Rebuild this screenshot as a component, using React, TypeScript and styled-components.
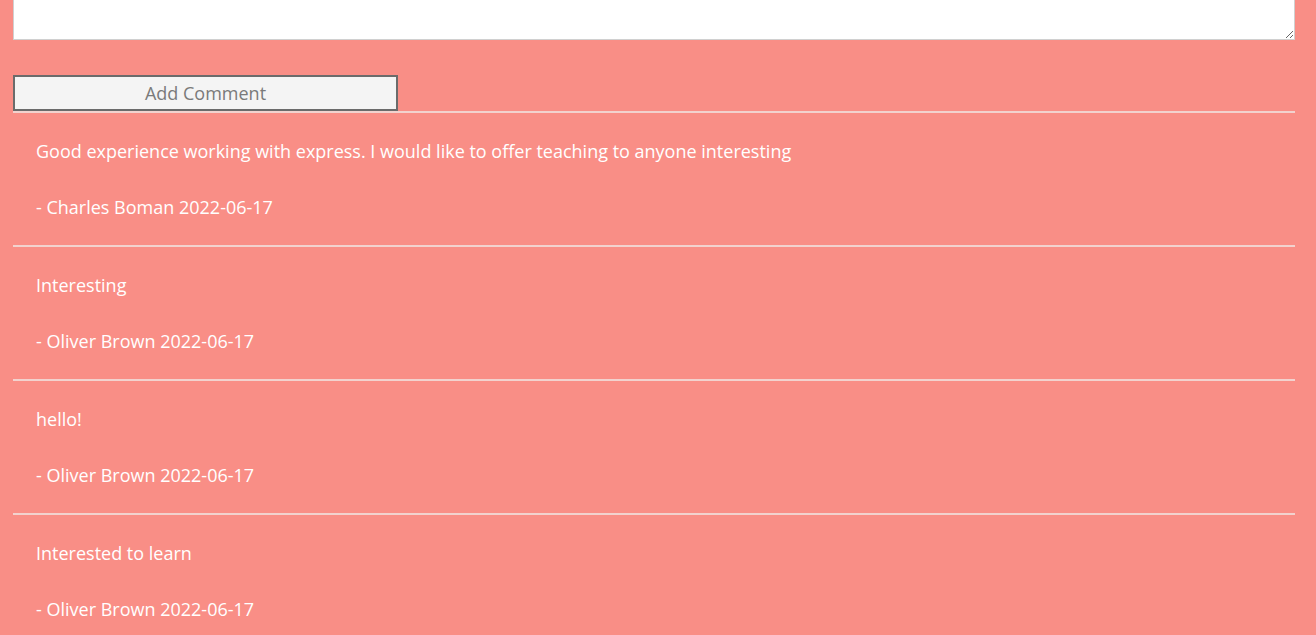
import React from "react";
import styled, { createGlobalStyle } from "styled-components";

const Global = createGlobalStyle`
  html, body { margin: 0; padding: 0; background: #f98e86; }
  body { font-family: "Open Sans", "Noto Sans", sans-serif; }
`;

const Page = styled.div`
  padding: 0 21px 0 13px;
  display: flex;
  flex-direction: column;
`;

const TextArea = styled.textarea`
  display: block;
  box-sizing: border-box;
  width: 100%;
  height: 40px;
  border: 1px solid #d0d0d0;
  border-top: none;
  background: #fff;
  resize: vertical;
  margin: 0;
  font-family: inherit;
`;

const AddButton = styled.button`
  box-sizing: border-box;
  width: 385px;
  height: 36px;
  margin-top: 35px;
  border: 2px solid #6b6b6b;
  background: #f4f4f4;
  color: #7a7a7a;
  font-family: "Open Sans", "Noto Sans", sans-serif;
  font-size: 18px;
  padding: 0;
`;

const List = styled.div`
  display: flex;
  flex-direction: column;
`;

const Comment = styled.div`
  border-top: 2px solid #f2d2ce;
  padding: 26px 23px 26px 23px;
  display: flex;
  flex-direction: column;
  gap: 32px;
  color: #fff;
  font-size: 18px;
  line-height: 24px;
`;

const Line = styled.div``;

const comments = [
  { text: "Good experience working with express. I would like to offer teaching to anyone interesting", author: "Charles Boman", date: "2022-06-17" },
  { text: "Interesting", author: "Oliver Brown", date: "2022-06-17" },
  { text: "hello!", author: "Oliver Brown", date: "2022-06-17" },
  { text: "Interested to learn", author: "Oliver Brown", date: "2022-06-17" },
];

export default function App() {
  return (
    <>
      <Global />
      <Page>
        <TextArea />
        <AddButton>Add Comment</AddButton>
        <List>
          {comments.map((c, i) => (
            <Comment key={i}>
              <Line>{c.text}</Line>
              <Line>- {c.author} {c.date}</Line>
            </Comment>
          ))}
        </List>
      </Page>
    </>
  );
}
